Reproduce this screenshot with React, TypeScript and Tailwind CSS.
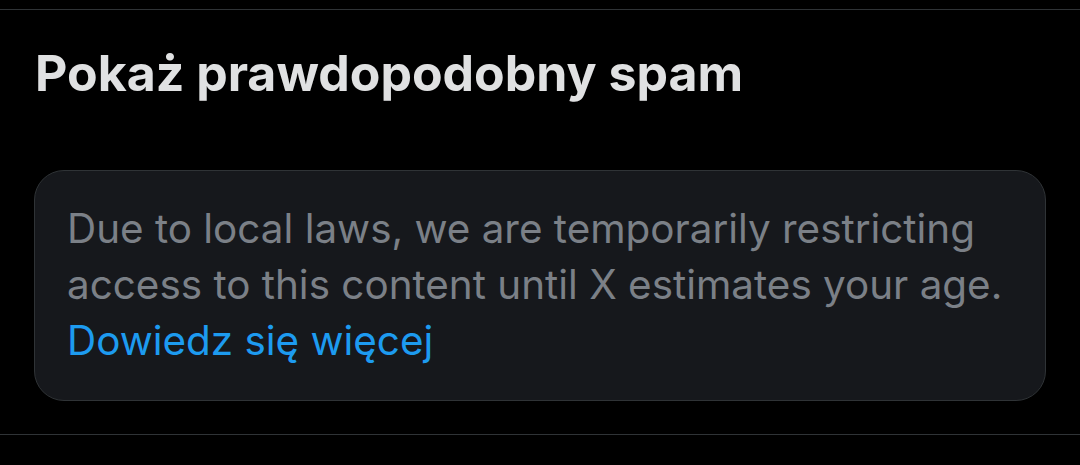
export default function App() {
  return (
    <div
      className="w-[1080px] h-[465px] bg-black overflow-hidden pt-[9px]"
      style={{ fontFamily: "Inter, 'Noto Sans', sans-serif" }}
    >
      <div className="border-t border-b border-[#2f3336] h-[426px] flex flex-col">
        <h1 className="px-[35px] pt-[35px] text-[50px] leading-[56px] font-bold text-[#e0e1e2]">
          Pokaż prawdopodobny spam
        </h1>
        <div className="mx-[34px] mt-[69px] h-[231px] rounded-[30px] border border-[#2f3336] bg-[#16181c] px-[32px] pt-[30px]">
          <p className="text-[40.4px] leading-[56px] text-[#7b8087]">
            Due to local laws, we are temporarily restricting access to this
            content until X estimates your age.{" "}
            <span className="text-[#1d9bf0]">Dowiedz się więcej</span>
          </p>
        </div>
      </div>
    </div>
  );
}
